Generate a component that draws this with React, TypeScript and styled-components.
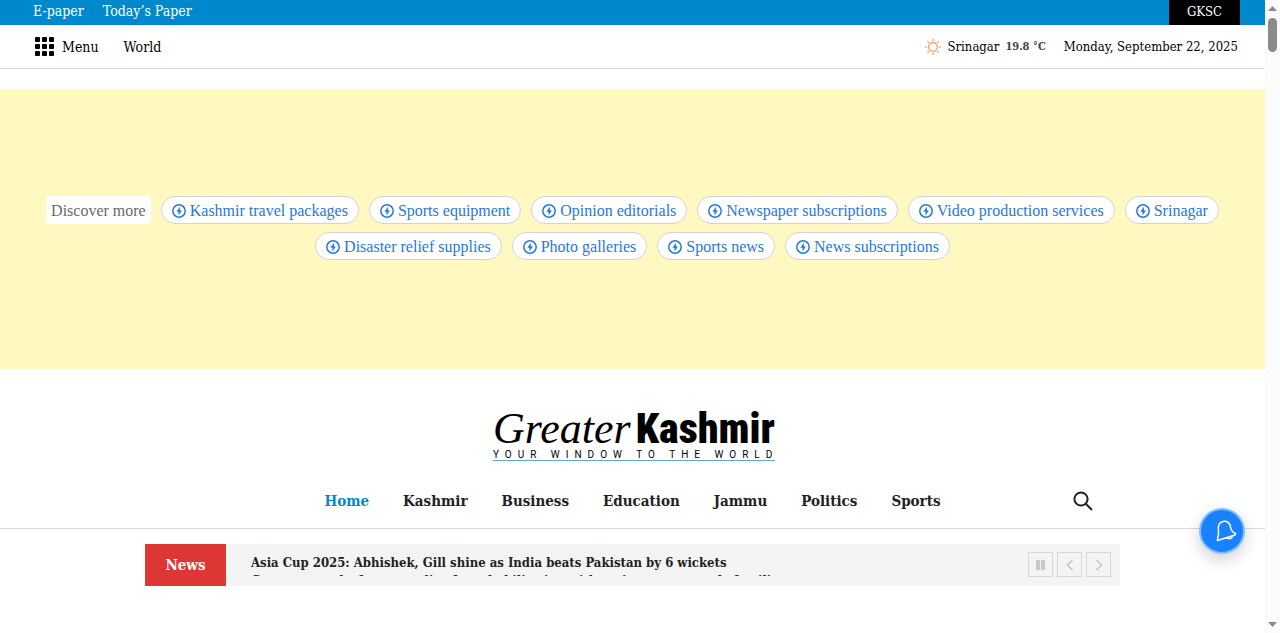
import React from 'react';
import styled, { createGlobalStyle } from 'styled-components';

const Global = createGlobalStyle`
  * { box-sizing: border-box; }
  body { margin: 0; background: #fff; color: #000; font-family: "DejaVu Serif Condensed", "DejaVu Serif", serif; }
  a { color: inherit; text-decoration: none; }
  button { font: inherit; cursor: pointer; padding: 0; }
`;

const Shell = styled.div`
  display: flex;
  min-height: 100vh;
`;
const Page = styled.div`
  flex: 1;
  min-width: 0;
`;

const TopBar = styled.div`
  display: flex;
  justify-content: space-between;
  height: 25px;
  padding: 0 25px 0 33px;
  background: #08c;
  color: #fff;
  font-size: 13px;
  line-height: 23px;
`;
const TopLinks = styled.nav`
  display: flex;
  gap: 19px;
  font-size: 14px;
`;
const Tag = styled.a`
  padding: 0 18px;
  background: #000;
`;

const UtilityBar = styled.div`
  display: flex;
  justify-content: space-between;
  align-items: center;
  height: 44px;
  padding: 0 27px 0 35px;
  border-bottom: 1px solid #d9d9d9;
  font-size: 13px;
`;
const Group = styled.div`
  display: flex;
  align-items: center;
  gap: 25px;
  font-size: 14px;
`;
const MenuButton = styled.button`
  display: flex;
  align-items: center;
  gap: 8px;
  border: 0;
  background: none;
`;
const Weather = styled.div`
  display: flex;
  align-items: center;
  gap: 18px;
`;
const Place = styled.div`
  display: flex;
  align-items: center;
  gap: 6px;
`;
const Temp = styled.span`
  color: #444;
  font-size: 11px;
  font-weight: bold;
`;

const Promo = styled.section`
  display: flex;
  flex-direction: column;
  justify-content: center;
  gap: 8px;
  min-height: 280px;
  margin-top: 20px;
  padding-bottom: 2px;
  background: #fff8c0;
  font: 16px/26px "Liberation Serif", serif;
`;
const ChipRow = styled.div`
  display: flex;
  justify-content: center;
  gap: 10px;
`;
const ChipLabel = styled.span`
  padding: 2px 5px 0;
  border-radius: 4px;
  background: #fff;
  color: #6a6a6a;
`;
const Chip = styled.a`
  display: flex;
  align-items: center;
  gap: 4px;
  height: 28px;
  padding: 2px 10px 0;
  border: 1px solid #d2d2dc;
  border-radius: 14px;
  background: #fff;
  color: #2878d8;
  white-space: nowrap;
`;

const Masthead = styled.header`
  display: flex;
  justify-content: center;
  padding: 38px 0 13px 3px;
`;
const Logo = styled.a`
  width: 282px;
  border-bottom: 1px solid #5fa8d8;
`;
const Name = styled.div`
  display: flex;
  align-items: baseline;
  justify-content: space-between;
  height: 42px;
`;
const Greater = styled.span`
  font: italic 44px/44px "Liberation Serif", serif;
`;
const Kashmir = styled.span`
  font: 900 42px/44px "Roboto Condensed", Roboto, "Liberation Sans", sans-serif;
`;
const Tagline = styled.div`
  font: 10px/11px Roboto, sans-serif;
  letter-spacing: 6px;
  white-space: nowrap;
`;

const NavBar = styled.div`
  display: flex;
  justify-content: center;
  align-items: center;
  height: 55px;
  border-bottom: 1px solid #d9d9d9;
`;
const NavInner = styled.div`
  display: grid;
  grid-template-columns: 1fr auto 1fr;
  align-items: center;
  width: 100%;
  max-width: 975px;
  padding: 0 27px;
`;
const Nav = styled.nav`
  display: flex;
  grid-column: 2;
  gap: 34px;
  font-size: 15px;
  font-weight: bold;
`;
const NavLink = styled.a<{ $active?: boolean }>`
  color: ${p => (p.$active ? '#08c' : '#222')};
`;
const SearchButton = styled.button`
  justify-self: end;
  display: flex;
  border: 0;
  background: none;
`;

const Ticker = styled.section`
  display: flex;
  align-items: center;
  height: 42px;
  max-width: 975px;
  margin: 15px auto 0;
  padding-right: 9px;
  background: #f4f4f4;
`;
const TickerLabel = styled.strong`
  align-self: stretch;
  width: 81px;
  background: #dd3735;
  color: #fff;
  font-size: 15px;
  line-height: 42px;
  text-align: center;
`;
const Headlines = styled.div`
  flex: 1;
  height: 22px;
  overflow: hidden;
  margin-left: 25px;
  color: #222;
  font-size: 13px;
  font-weight: bold;
  line-height: 18px;
`;
const Headline = styled.a`
  display: block;
  white-space: nowrap;
`;
const Controls = styled.div`
  display: flex;
  gap: 4px;
  padding-bottom: 1px;
`;
const Control = styled.button`
  display: flex;
  align-items: center;
  justify-content: center;
  width: 25px;
  height: 25px;
  border: 1px solid #d8d8d8;
  background: #f4f4f4;
`;

const Bell = styled.button`
  position: fixed;
  right: 35px;
  bottom: 79px;
  display: flex;
  align-items: center;
  justify-content: center;
  width: 46px;
  height: 46px;
  padding-left: 8px;
  border: 2px solid #7fc0ff;
  border-radius: 50%;
  background: #1a82ff;
  box-shadow: 0 6px 16px rgba(0, 0, 40, 0.18);
`;

const Track = styled.div`
  position: sticky;
  top: 0;
  display: flex;
  flex-direction: column;
  align-items: center;
  width: 15px;
  height: 100vh;
  padding: 6px 0;
  background: #fcfcfc;
`;
const Thumb = styled.div`
  width: 9px;
  height: 34px;
  margin: 7px 0 auto;
  border-radius: 5px;
  background: #8b8b8b;
`;

const chips = [
  ['Kashmir travel packages', 'Sports equipment', 'Opinion editorials', 'Newspaper subscriptions', 'Video production services', 'Srinagar'],
  ['Disaster relief supplies', 'Photo galleries', 'Sports news', 'News subscriptions'],
];
const sections = ['Home', 'Kashmir', 'Business', 'Education', 'Jammu', 'Politics', 'Sports'];
const headlines = [
  'Asia Cup 2025: Abhishek, Gill shine as India beats Pakistan by 6 wickets',
  'Government drafts new policy for rehabilitation with assistance to needy families',
];

const GridIcon = () => (
  <svg width="19" height="19" viewBox="0 0 19 19">
    {[0, 7, 14].map(y => [0, 7, 14].map(x => <rect key={`${x}-${y}`} x={x} y={y} width="5" height="5" rx="1" />))}
  </svg>
);
const SunIcon = () => (
  <svg width="18" height="18" viewBox="0 0 18 18" fill="none" stroke="#f0985c" strokeWidth="1.2">
    <circle cx="9" cy="9" r="4.4" />
    <path d="M9 1v2.2M9 14.8V17M1 9h2.2M14.800 9H17M3.400 3.400l1.500 1.500M13.100 13.100l1.500 1.500M3.400 14.600l1.500-1.500M13.100 4.900l1.500-1.500" />
  </svg>
);
const BoltIcon = () => (
  <svg width="14" height="14" viewBox="0 0 14 14">
    <circle cx="7" cy="7" r="6.2" fill="none" stroke="currentColor" strokeWidth="1.5" />
    <path d="M7.900 2.700 4.400 7.700h2.100v3.700l3.400-5H7.900z" fill="currentColor" />
  </svg>
);

export default function App() {
  return (
    <Shell>
      <Global />
      <Page>
        <TopBar>
          <TopLinks>
            <a href="#epaper">E-paper</a>
            <a href="#today">Today’s Paper</a>
          </TopLinks>
          <Tag href="#gksc">GKSC</Tag>
        </TopBar>
        <UtilityBar>
          <Group>
            <MenuButton><GridIcon />Menu</MenuButton>
            <a href="#world">World</a>
          </Group>
          <Weather>
            <Place><SunIcon /><span>Srinagar</span><Temp>19.8 °C</Temp></Place>
            <span>Monday, September 22, 2025</span>
          </Weather>
        </UtilityBar>
        <Promo>
          {chips.map((row, i) => (
            <ChipRow key={i}>
              {i === 0 && <ChipLabel>Discover more</ChipLabel>}
              {row.map(c => <Chip key={c} href="#topic"><BoltIcon />{c}</Chip>)}
            </ChipRow>
          ))}
        </Promo>
        <Masthead>
          <Logo href="#home">
            <Name><Greater>Greater</Greater><Kashmir>Kashmir</Kashmir></Name>
            <Tagline>YOUR WINDOW TO THE WORLD</Tagline>
          </Logo>
        </Masthead>
        <NavBar>
          <NavInner>
            <Nav>{sections.map((s, i) => <NavLink key={s} href="#section" $active={i === 0}>{s}</NavLink>)}</Nav>
            <SearchButton aria-label="Search">
              <svg width="20" height="20" viewBox="0 0 20 20" fill="none" stroke="#222" strokeWidth="2">
                <circle cx="8" cy="8" r="6.6" /><path d="m12.500 12.500 6.500 6.500" />
              </svg>
            </SearchButton>
          </NavInner>
        </NavBar>
        <Ticker>
          <TickerLabel>News</TickerLabel>
          <Headlines>
            {headlines.map(h => <Headline key={h} href="#story">{h}</Headline>)}
          </Headlines>
          <Controls>
            <Control aria-label="Pause"><svg width="9" height="10"><path d="M0 0h4v10H0zM5 0h4v10H5z" fill="#c9c9c9" /></svg></Control>
            <Control aria-label="Previous"><svg width="8" height="12" fill="none" stroke="#c4c4c4" strokeWidth="1.5"><path d="M6.500 1 1.500 6l5 5" /></svg></Control>
            <Control aria-label="Next"><svg width="8" height="12" fill="none" stroke="#c4c4c4" strokeWidth="1.5"><path d="m1.500 1 5 5-5 5" /></svg></Control>
          </Controls>
        </Ticker>
        <Bell aria-label="Notifications">
          <svg width="24" height="24" viewBox="0 0 24 24" fill="none" stroke="#fff" strokeWidth="1.5" strokeLinejoin="round">
            <path d="M3.500 21.500C3 19 5 17 4.500 12.500 3.500 7 5 3.500 9 2.500s7 1.500 7.500 5.500c.5 3.500 1.500 5 5 6.500l-.5 1.500zM14 18.500c1 2 4 1.500 4.500-1.500" />
          </svg>
        </Bell>
      </Page>
      <Track aria-hidden="true">
        <svg width="9" height="5"><path d="M0 5 4.500 0 9 5z" fill="#8b8b8b" /></svg>
        <Thumb />
        <svg width="9" height="5"><path d="M0 0h9L4.500 5z" fill="#8b8b8b" /></svg>
      </Track>
    </Shell>
  );
}
